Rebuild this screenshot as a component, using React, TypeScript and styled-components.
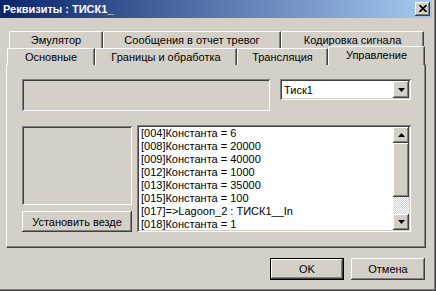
import styled, { createGlobalStyle } from 'styled-components';

const face = '#d4d0c8';
const light = '#ffffff';
const shadow = '#808080';
const dark = '#404040';

const raised = `box-shadow: inset -1px -1px ${dark}, inset 1px 1px ${light}, inset -2px -2px ${shadow}, inset 2px 2px ${face};`;
const sunken = `box-shadow: inset 1px 1px ${shadow}, inset -1px -1px ${light}, inset 2px 2px ${dark}, inset -2px -2px ${face};`;

const GlobalStyle = createGlobalStyle`
  html, body { margin: 0; padding: 0; background: ${face}; }
  body {
    font-family: "Liberation Sans", Arial, sans-serif;
    font-size: 11px;
    color: #000;
  }
`;

const Window = styled.div`
  width: 436px;
  height: 291px;
  box-sizing: border-box;
  padding: 0 4px 4px 0;
  background: ${face};
  box-shadow: inset -1px -1px ${dark}, inset -2px -2px ${shadow};
  display: flex;
  flex-direction: column;
  overflow: hidden;
`;

const TitleBar = styled.div`
  height: 18px;
  flex-shrink: 0;
  display: flex;
  align-items: center;
  justify-content: space-between;
  padding: 0 2px 0 3px;
  background: linear-gradient(90deg, #0a246a 0%, #a6caf0 100%);
  color: #fff;
  font-weight: bold;
  font-size: 11px;
  white-space: pre;
`;

const CloseButton = styled.div`
  width: 15px;
  height: 14px;
  box-sizing: border-box;
  background: ${face};
  ${raised}
  display: flex;
  align-items: center;
  justify-content: center;
  padding-bottom: 1px;
`;

const Body = styled.div`
  display: flex;
  flex-direction: column;
  padding: 13px 0 0 6px;
`;

const TabRow = styled.div<{ $front?: boolean }>`
  display: flex;
  height: ${({ $front }) => ($front ? 16 : 17)}px;
  padding-left: ${({ $front }) => ($front ? 1 : 3)}px;
`;

const Tab = styled.div<{ $w: number; $active?: boolean }>`
  width: ${({ $w }) => $w}px;
  height: ${({ $active }) => ($active ? 19 : 17)}px;
  margin-top: ${({ $active }) => ($active ? -2 : 0)}px;
  box-sizing: border-box;
  flex-shrink: 0;
  position: relative;
  z-index: ${({ $active }) => ($active ? 2 : 1)};
  background: ${face};
  border-top: 1px solid ${light};
  border-left: 1px solid ${light};
  border-right: 1px solid ${dark};
  border-top-left-radius: 2px;
  border-top-right-radius: 1px;
  box-shadow: inset -1px 0 ${shadow};
  display: flex;
  align-items: center;
  justify-content: center;
  padding-bottom: ${({ $active }) => ($active ? 3 : 1)}px;
  white-space: nowrap;
`;

const Panel = styled.div`
  width: 420px;
  height: 184px;
  box-sizing: border-box;
  border: 1px solid;
  border-color: ${light} ${dark} ${dark} ${light};
  box-shadow: inset -1px -1px ${shadow};
  padding: 14px 14px 14px 15px;
  display: flex;
  flex-direction: column;
  gap: 14px;
`;

const TopRow = styled.div`
  display: flex;
  gap: 10px;
  align-items: flex-start;
`;

const BottomRow = styled.div`
  display: flex;
  gap: 5px;
`;

const SunkenBox = styled.div<{ $h: number }>`
  height: ${({ $h }) => $h}px;
  box-sizing: border-box;
  background: ${face};
  ${sunken}
`;

const EditBox = styled(SunkenBox)`
  flex: 1;
`;

const Combo = styled.div`
  width: 131px;
  height: 21px;
  box-sizing: border-box;
  background: #fff;
  ${sunken}
  display: flex;
  align-items: center;
  padding: 2px;
`;

const ComboText = styled.div`
  flex: 1;
  padding-left: 2px;
`;

const ArrowButton = styled.div<{ $h?: number }>`
  width: 16px;
  height: ${({ $h }) => $h ?? 16}px;
  box-sizing: border-box;
  flex-shrink: 0;
  background: ${face};
  ${raised}
  display: flex;
  align-items: center;
  justify-content: center;
`;

const LeftColumn = styled.div`
  width: 110px;
  display: flex;
  flex-direction: column;
  gap: 6px;
  padding-top: 1px;
`;

const PushButton = styled.div<{ $w?: number; $default?: boolean }>`
  width: ${({ $w }) => ($w ? `${$w}px` : 'auto')};
  height: ${({ $w }) => ($w ? 22 : 21)}px;
  box-sizing: border-box;
  background: ${face};
  ${({ $default }) =>
    $default
      ? `box-shadow: inset 0 0 0 1px #000, inset -2px -2px ${dark}, inset 2px 2px ${light}, inset -3px -3px ${shadow};`
      : raised}
  display: flex;
  align-items: center;
  justify-content: center;
  white-space: nowrap;
`;

const ListBox = styled.div`
  flex: 1;
  height: 107px;
  box-sizing: border-box;
  background: #fff;
  ${sunken}
  display: flex;
  padding: 2px;
`;

const ListItems = styled.div`
  flex: 1;
  padding-left: 2px;
  overflow: hidden;
`;

const ListItem = styled.div`
  height: 13px;
  line-height: 13px;
  white-space: nowrap;
`;

const ScrollBar = styled.div`
  width: 16px;
  display: flex;
  flex-direction: column;
`;

const Thumb = styled.div`
  height: 54px;
  box-sizing: border-box;
  background: ${face};
  ${raised}
`;

const Track = styled.div`
  flex: 1;
  background: repeating-conic-gradient(${face} 0 25%, #fff 0 50%) 0 0 / 2px 2px;
`;

const ButtonRow = styled.div`
  width: 420px;
  box-sizing: border-box;
  display: flex;
  justify-content: flex-end;
  gap: 7px;
  padding-right: 1px;
  margin-top: 10px;
`;

const Triangle = ({ up }: { up?: boolean }) => (
  <svg width="7" height="4" viewBox="0 0 7 4">
    <polygon points={up ? '3.5,0 7,4 0,4' : '0,0 7,0 3.5,4'} fill="#000" />
  </svg>
);

const items = [
  '[004]Константа = 6',
  '[008]Константа = 20000',
  '[009]Константа = 40000',
  '[012]Константа = 1000',
  '[013]Константа = 35000',
  '[015]Константа = 100',
  '[017]=>Lagoon_2 : ТИСК1__In',
  '[018]Константа = 1',
];

export default function App() {
  return (
    <>
      <GlobalStyle />
      <Window>
        <TitleBar>
          <span>Реквизиты : ТИСК1_</span>
          <CloseButton>
            <svg width="8" height="7" viewBox="0 0 8 7">
              <path d="M0.5 0 L7.5 7 M7.5 0 L0.5 7" stroke="#000" strokeWidth="1.6" />
            </svg>
          </CloseButton>
        </TitleBar>
        <Body>
          <TabRow>
            <Tab $w={94}>Эмулятор</Tab>
            <Tab $w={178}>Сообщения в отчет тревог</Tab>
            <Tab $w={143}>Кодировка сигнала</Tab>
          </TabRow>
          <TabRow $front>
            <Tab $w={88}>Основные</Tab>
            <Tab $w={142}>Границы и обработка</Tab>
            <Tab $w={91}>Трансляция</Tab>
            <Tab $w={97} $active>Управление</Tab>
          </TabRow>
          <Panel>
            <TopRow>
              <EditBox $h={32} />
              <Combo>
                <ComboText>Тиск1</ComboText>
                <ArrowButton $h={17}>
                  <Triangle />
                </ArrowButton>
              </Combo>
            </TopRow>
            <BottomRow>
              <LeftColumn>
                <SunkenBox $h={79} />
                <PushButton>Установить везде</PushButton>
              </LeftColumn>
              <ListBox>
                <ListItems>
                  {items.map((t) => (
                    <ListItem key={t}>{t}</ListItem>
                  ))}
                </ListItems>
                <ScrollBar>
                  <ArrowButton>
                    <Triangle up />
                  </ArrowButton>
                  <Thumb />
                  <Track />
                  <ArrowButton>
                    <Triangle />
                  </ArrowButton>
                </ScrollBar>
              </ListBox>
            </BottomRow>
          </Panel>
          <ButtonRow>
            <PushButton $w={74} $default>OK</PushButton>
            <PushButton $w={74}>Отмена</PushButton>
          </ButtonRow>
        </Body>
      </Window>
    </>
  );
}
